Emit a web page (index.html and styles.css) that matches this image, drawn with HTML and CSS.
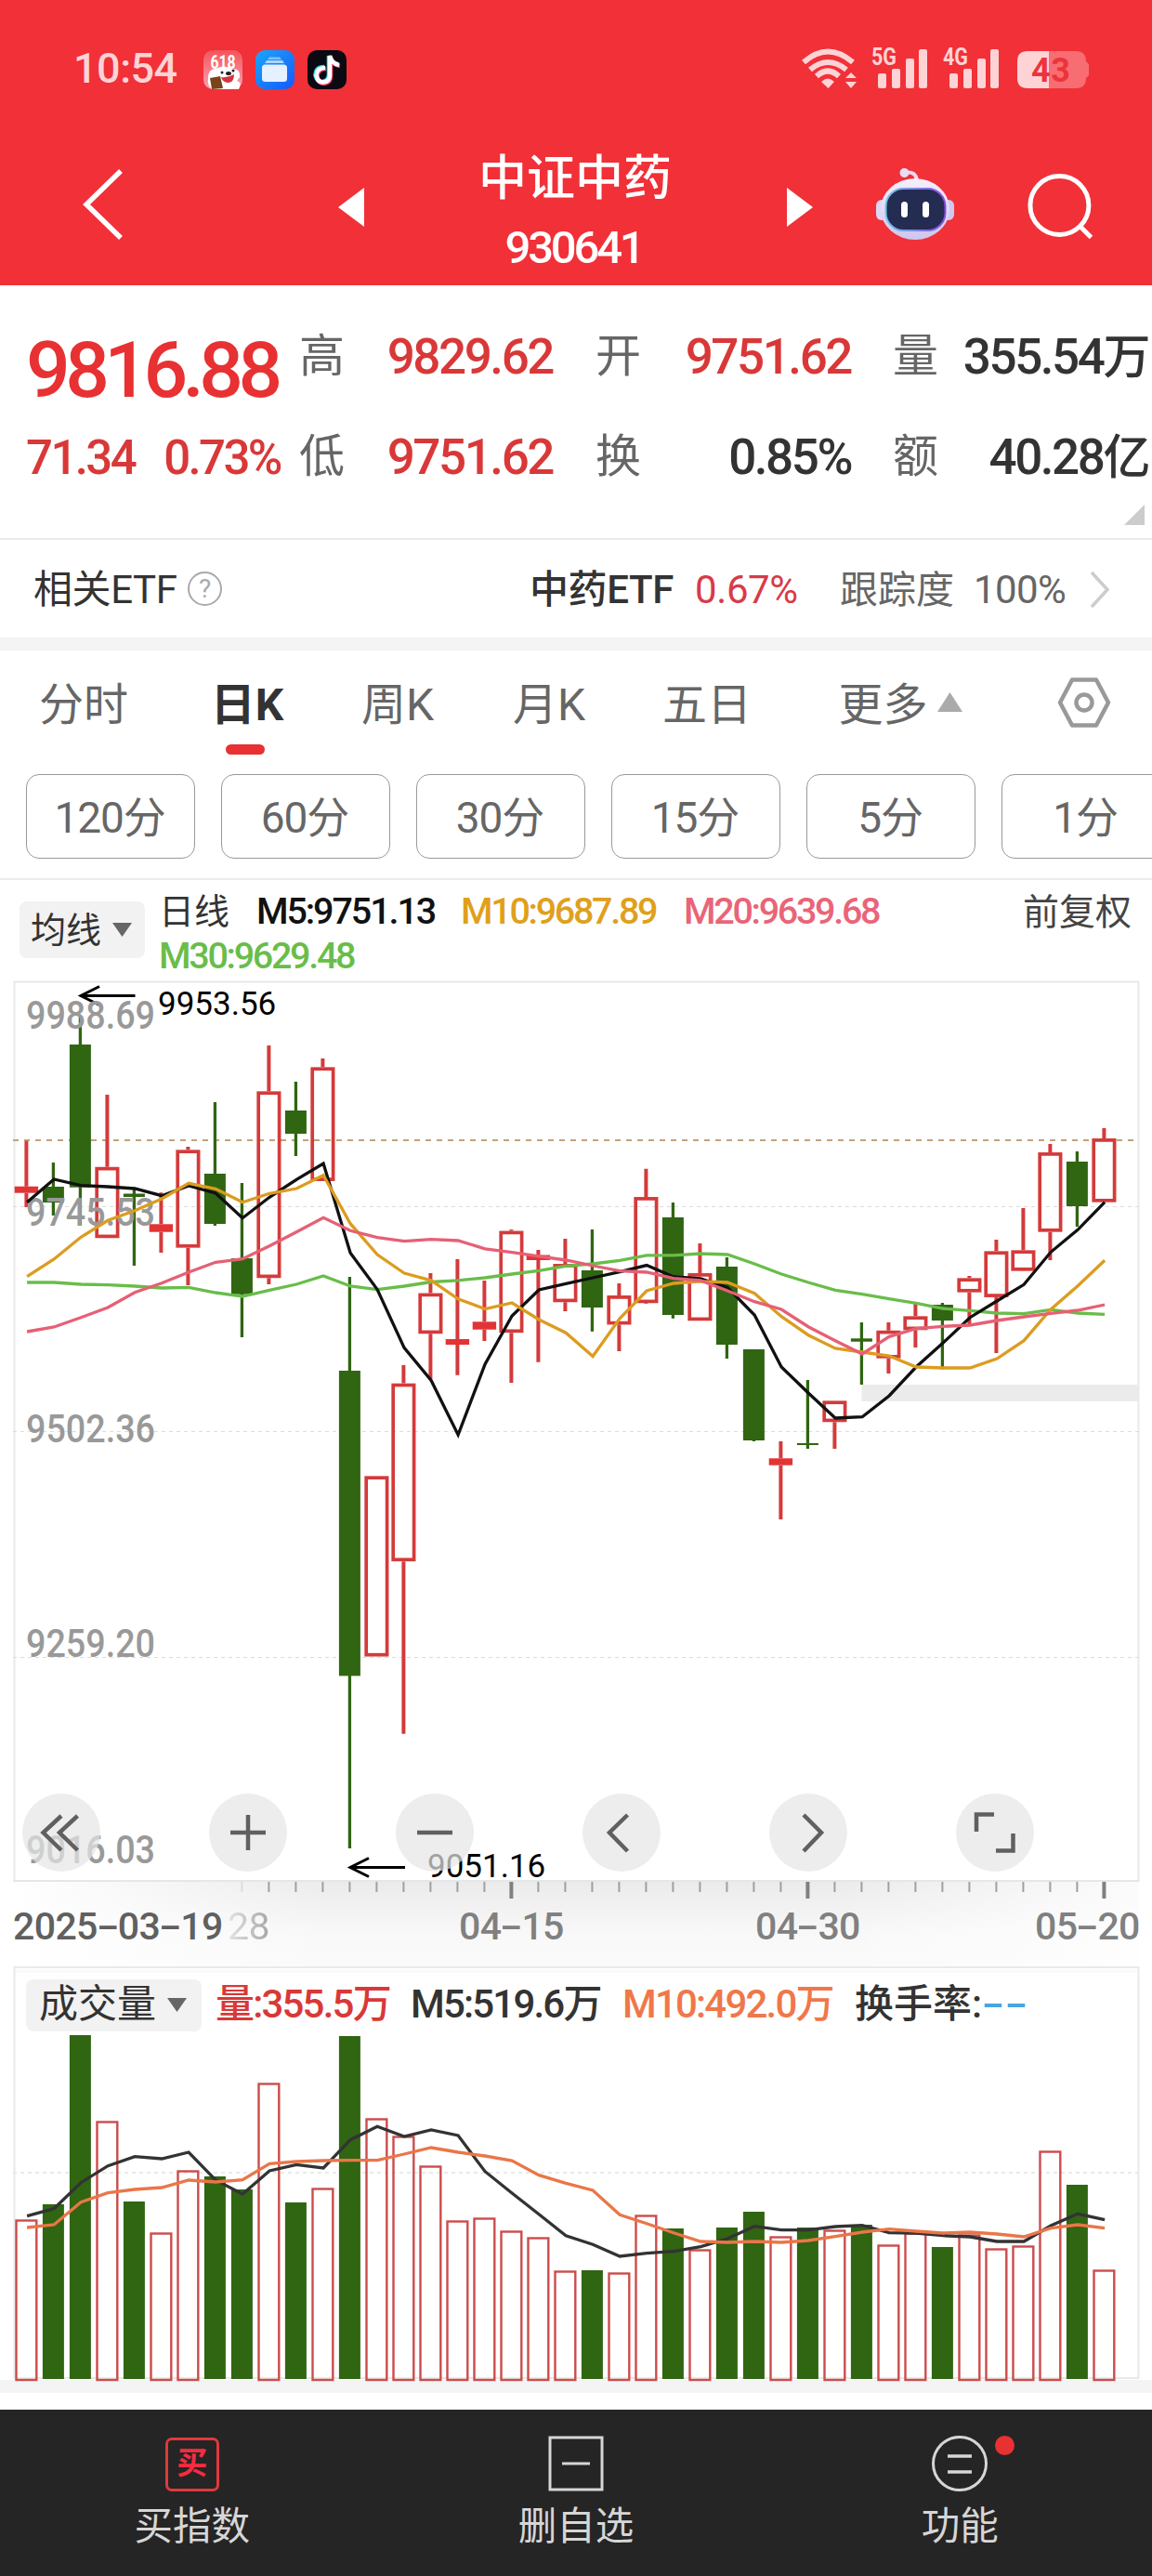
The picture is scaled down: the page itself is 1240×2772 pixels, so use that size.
FILE: index.html
```html
<!DOCTYPE html>
<html lang="zh-CN">
<head>
<meta charset="utf-8">
<title>中证中药 930641</title>
<link rel="stylesheet" href="styles.css">
</head>
<body>
<header class="header">
  <div class="status">
    <span class="clock">10:54</span>
    <div class="apps">
      <svg width="42" height="42" viewBox="0 0 42 42">
        <defs><linearGradient id="promo" x1="0" y1="0" x2="0" y2="1"><stop offset="0" stop-color="#f5545a"/><stop offset="1" stop-color="#f9a3b4"/></linearGradient></defs>
        <rect width="42" height="42" rx="10" fill="url(#promo)"/>
        <path d="M5 30Q5 20 13 20Q22 15 30 20Q40 19 39 29L36 33Q42 35 38 42H9Q4 38 5 30Z" fill="#fff"/>
        <text x="21" y="19.500" class="promo-text" textLength="27" lengthAdjust="spacingAndGlyphs">618</text>
        <path d="M19 29Q26 30 33 26Q33 35 26 35Q20 34 19 29Z" fill="#d8323c"/>
        <ellipse cx="27" cy="25" rx="3" ry="2" fill="#222"/><circle cx="20" cy="24" r="1.500" fill="#222"/><circle cx="32" cy="22" r="1.500" fill="#222"/>
        <path d="M7 30L18 28L21 41L9 42Z" fill="#7a4319"/>
      </svg>
      <svg width="42" height="42" viewBox="0 0 42 42">
        <defs><linearGradient id="blue" x1="0" y1="0" x2="1" y2="1"><stop offset="0" stop-color="#1ba6fb"/><stop offset="1" stop-color="#1559fb"/></linearGradient></defs>
        <rect width="42" height="42" rx="10" fill="url(#blue)"/>
        <path d="M15 7.500H26L28 10H13Z" fill="#7fc3fd"/><path d="M12 11H29L31 14H10Z" fill="#a9d6fe"/>
        <rect x="7" y="15.500" width="27" height="18.500" rx="3.500" fill="#e6f1ff"/>
      </svg>
      <svg width="42" height="42" viewBox="0 0 42 42">
        <rect width="42" height="42" rx="10" fill="#0b0912"/>
        <g fill="none" stroke-width="4.600">
          <path d="M18 18Q9 18 8.500 27Q10 34 16 34Q23 33 23 26V6Q25 14 33 15" stroke="#25e0e0"/>
          <path d="M20 20Q11 20 10.500 28Q12 36 18 36Q25 35 25 28V8Q27 16 35 17" stroke="#f5345c"/>
          <path d="M19 19Q10 19 9.500 27Q11 35 17 34.500Q24 34 24 27V6Q26 14.500 34 16" stroke="#fff"/>
        </g>
      </svg>
    </div>
    <svg class="signals" width="320" height="60" viewBox="860 40 320 60">
      <g fill="none" stroke="#fdd3d5" stroke-width="6">
        <path d="M865 67Q891 44 918 67"/><path d="M872 75Q891 59 911 75"/><path d="M879 82Q891 71 903 82"/>
      </g>
      <g fill="#fdd3d5">
        <path d="M884 88Q891 81 898 88L891.500 95Z"/><path d="M910 84L916 78L922 84ZM910 88L916 95L922 88Z"/>
        <rect x="945" y="79" width="9" height="16" rx="2"/><rect x="960" y="74" width="9" height="21" rx="2"/><rect x="975" y="63" width="9" height="32" rx="2"/><rect x="989" y="53" width="9" height="42" rx="2"/>
        <rect x="1022" y="79" width="9" height="16" rx="2"/><rect x="1037" y="74" width="9" height="21" rx="2"/><rect x="1052" y="63" width="9" height="32" rx="2"/><rect x="1066" y="53" width="9" height="42" rx="2"/>
        <text x="938" y="70" class="net" textLength="27" lengthAdjust="spacingAndGlyphs">5G</text>
        <text x="1015" y="70" class="net" textLength="27" lengthAdjust="spacingAndGlyphs">4G</text>
      </g>
      <path d="M1129 55H1158Q1169 55 1169 66L1172 69V81L1169 84Q1169 95 1158 95H1129Z" fill="#f86d72"/>
      <path d="M1129 55H1106Q1095 55 1095 66V84Q1095 95 1106 95H1129Z" fill="#fdd3d5"/>
      <text x="1110" y="87.500" class="battery" textLength="42">43</text>
    </svg>
  </div>
  <nav class="nav">
    <svg class="back" width="48" height="80" viewBox="88 180 48 80"><path d="M130 184L93 220L130 256" fill="none" stroke="#fff" stroke-width="5.500"/></svg>
    <svg class="prev" width="28" height="42"><path d="M28 0V42L0 21Z" fill="#fff"/></svg>
    <div class="title"><h1>中证中药</h1><span>930641</span></div>
    <svg class="next" width="28" height="42"><path d="M0 0V42L28 21Z" fill="#fff"/></svg>
    <svg class="robot" width="88" height="80" viewBox="941 180 88 80">
      <defs>
        <linearGradient id="shell" x1="0" y1="0" x2="0" y2="1"><stop offset="0" stop-color="#f6effb"/><stop offset="1" stop-color="#cdc6ef"/></linearGradient>
        <linearGradient id="visor" x1="0" y1="0" x2="1" y2="0"><stop offset="0" stop-color="#6fc5e8"/><stop offset="1" stop-color="#8a4be0"/></linearGradient>
      </defs>
      <path d="M973 186Q986 183 987 195" fill="none" stroke="#f1d9ee" stroke-width="4"/><circle cx="973.500" cy="186" r="5" fill="#e9dcf5"/>
      <rect x="943" y="215" width="13" height="22" rx="6" fill="#ddd5f3"/><rect x="1014" y="215" width="13" height="22" rx="6" fill="#cfc8f1"/>
      <ellipse cx="985" cy="225" rx="37" ry="33" fill="url(#shell)"/>
      <rect x="953.500" y="203" width="64" height="45" rx="19" fill="#242c52" stroke="url(#visor)" stroke-width="2"/>
      <rect x="970" y="217" width="7" height="17" rx="3.500" fill="#fff"/><rect x="993" y="217" width="7" height="17" rx="3.500" fill="#fff"/>
    </svg>
    <svg class="search" width="72" height="72" viewBox="1105 186 72 72"><circle cx="1140.400" cy="221" r="31.500" fill="none" stroke="#fff" stroke-width="5"/><path d="M1162 243L1174.500 255.500" stroke="#fff" stroke-width="5"/></svg>
  </nav>
</header>

<section class="quote">
  <div class="last">9816.88</div>
  <div class="change"><span>71.34</span><span>0.73%</span></div>
  <dl class="stats">
    <dt>高</dt><dd class="up">9829.62</dd><dt>开</dt><dd class="up">9751.62</dd><dt>量</dt><dd>355.54<i>万</i></dd>
    <dt>低</dt><dd class="up">9751.62</dd><dt>换</dt><dd>0.85%</dd><dt>额</dt><dd>40.28<i>亿</i></dd>
  </dl>
  <svg class="corner" width="22" height="22"><path d="M22 0V22H0Z" fill="#ccc"/></svg>
</section>

<section class="etf">
  <span class="etf-label">相关ETF</span><span class="help">?</span>
  <b>中药ETF</b><span class="etf-pct">0.67%</span><span class="track">跟踪度</span><span class="track-pct">100%</span>
  <svg width="24" height="42"><path d="M3 2L20 20.500L3 39" fill="none" stroke="#ccc" stroke-width="3.500"/></svg>
</section>

<section class="periods">
  <div class="tabs">
    <span>分时</span><span class="active">日K</span><span>周K</span><span>月K</span><span>五日</span>
    <span class="more">更多<svg width="27" height="21"><path d="M13.500 0L27 21H0Z" fill="#aaa"/></svg></span>
    <span class="settings"><svg width="60" height="60" viewBox="-30 -30 60 60" fill="none" stroke="#999" stroke-width="4.500" stroke-linejoin="round"><path d="M-13 -24.500H13L26 0L13 24.500H-13L-26 0Z"/><circle r="8.500"/></svg></span>
  </div>
  <div class="minutes"><button>120分</button><button>60分</button><button>30分</button><button>15分</button><button>5分</button><button>1分</button></div>
</section>

<section class="legend">
  <div class="picker">均线<svg width="21" height="15"><path d="M0 0H21L10.500 15Z" fill="#666"/></svg></div>
  <div class="averages"><span class="day">日线</span><span class="m5">M5:9751.13</span><span class="m10">M10:9687.89</span><span class="m20">M20:9639.68</span><span class="m30">M30:9629.48</span></div>
  <div class="adjust">前复权</div>
</section>

<section class="kline">
  <svg width="1240" height="970" viewBox="0 1055 1240 970">
    <path d="M15.500 2025V1056.500H1225.500V2025" fill="none" stroke="#e9e9e9" stroke-width="2"/>
    <path d="M14 2024H1226" stroke="#e6e6e6" stroke-width="2"/>
    <path d="M14 1298.500H1226M14 1540.500H1226M14 1783.500H1226" stroke="#dcdcdc" stroke-dasharray="4 4"/>
    <path d="M14 1227H1222" stroke="#c2a27a" stroke-width="2" stroke-dasharray="6 6"/>
    <rect x="927.500" y="1490" width="298.500" height="18" fill="#ebebeb"/>
    <g id="candles"></g>
    <path d="M145.500 1071.500H87M107 1061.500L87 1071.500L107 1081.500M436 2009.500H377M397 1999.500L377 2009.500L397 2019.500" class="arrow"/>
    <g class="axis">
      <text x="28" y="1107" textLength="139" lengthAdjust="spacingAndGlyphs">9988.69</text><text x="28" y="1319" textLength="139" lengthAdjust="spacingAndGlyphs">9745.53</text>
      <text x="28" y="1551.500" textLength="139" lengthAdjust="spacingAndGlyphs">9502.36</text><text x="28" y="1783" textLength="139" lengthAdjust="spacingAndGlyphs">9259.20</text><text x="28" y="2005" textLength="139" lengthAdjust="spacingAndGlyphs">9016.03</text>
    </g>
    <g id="averages"></g>
    <g class="mark"><text x="170" y="1092">9953.56</text><text x="460" y="2019.500">9051.16</text></g>
  </svg>
  <div class="controls">
    <button><svg viewBox="24 1930 84 84"><path d="M66 1954L46.500 1972L66 1991M83.500 1954L64 1972L83.500 1991"/></svg></button>
    <button><svg viewBox="225 1930 84 84"><path d="M248 1972H286M267 1953V1991"/></svg></button>
    <button><svg viewBox="426 1930 84 84"><path d="M449 1972H487"/></svg></button>
    <button><svg viewBox="627 1930 84 84"><path d="M675.500 1953L656 1972L675.500 1992"/></svg></button>
    <button><svg viewBox="828 1930 84 84"><path d="M865 1953L884 1972L865 1992"/></svg></button>
    <button><svg viewBox="1029 1930 84 84"><path d="M1070 1952.500H1051V1971M1090.500 1973V1991.500H1072"/></svg></button>
  </div>
</section>

<section class="dates">
  <svg width="1240" height="20" viewBox="0 2025 1240 20" id="ticks"></svg>
  <div class="days"><span class="first">2025<i>-</i>03<i>-</i>19</span><span class="faded">28</span><span class="d1">04<i>-</i>15</span><span class="d2">04<i>-</i>30</span><span class="d3">05<i>-</i>20</span></div>
</section>

<section class="volume">
  <svg width="1240" height="446" viewBox="0 2116 1240 446">
    <path d="M14 2119H1226V2123H14Z" fill="#fafafa"/>
    <path d="M15.500 2560V2117H1225.500V2559H15" fill="none" stroke="#e9e9e9" stroke-width="2"/>
    <path d="M14 2338H1226" stroke="#e9e9e9" stroke-width="2" stroke-dasharray="4 4"/>
    <g id="bars"></g>
  </svg>
  <div class="vol-legend">
    <div class="picker">成交量<svg width="21" height="15"><path d="M0 0H21L10.500 15Z" fill="#666"/></svg></div>
    <span class="v0">量:355.5万</span><span class="v5">M5:519.6万</span><span class="v10">M10:492.0万</span><span class="rate">换手率:</span><span class="none"><i>-</i><i>-</i></span>
  </div>
</section>

<footer class="toolbar">
  <div><span class="buy">买</span><p>买指数</p></div>
  <div><svg width="60" height="60"><path d="M2 2H58V58H2ZM15 30H45" fill="none" stroke="#d6d6d6" stroke-width="3"/></svg><p>删自选</p></div>
  <div><svg width="60" height="60"><circle cx="30" cy="30" r="28.500" fill="none" stroke="#d6d6d6" stroke-width="3"/><path d="M17 22H43M17 39H43" stroke="#d6d6d6" stroke-width="3.500"/></svg><em></em><p>功能</p></div>
</footer>
<script src="chart.js"></script>
</body>
</html>
```
FILE: styles.css
```css
* { box-sizing: border-box; }
body { margin: 0; width: 1240px; height: 2772px; overflow: hidden; background: #fff; color: #333; font-family: Roboto, "Noto Sans CJK SC", sans-serif; display: flex; flex-direction: column; }
svg { display: block; flex: none; overflow: visible; }
i { font-style: normal; }
button { font: inherit; padding: 0; border: 0; flex: none; }

.header { height: 307px; background: #f13038; color: #fff; }
.status { height: 140px; display: flex; padding: 50px 60px 0 79px; }
.clock { width: 140px; font-size: 45px; line-height: 48px; font-weight: 500; color: #fdd3d5; letter-spacing: -.5px; }
.apps { display: flex; gap: 14px; padding-top: 4px; }
.signals { margin: -10px 0 0 auto; }
.promo-text { font-size: 20px; font-weight: 700; fill: #fff; text-anchor: middle; }
.net { font-size: 26px; font-weight: 700; }
.battery { font-size: 36px; font-weight: 700; fill: #ee333b; }
.nav { height: 167px; display: flex; align-items: flex-start; }
.back { margin: 40px 0 0 88px; }
.prev { margin: 62px 0 0 228px; }
.title { width: 340px; margin-left: 57px; text-align: center; }
.title h1 { margin: 19px 0 0; font-size: 52px; font-weight: 500; line-height: 68px; }
.title span { display: block; margin-top: 13px; font-size: 49px; font-weight: 500; line-height: 54px; letter-spacing: -3.200px; text-indent: -3px; }
.next { margin: 62px 0 0 58px; }
.robot { margin: 40px 0 0 66px; }
.search { margin: 46px 0 0 76px; }

.quote { height: 274px; border-bottom: 2px solid #ebebeb; display: grid; grid-template-columns: 294px 1fr; grid-template-rows: 106px 54px; padding: 50px 2px 0 28px; position: relative; align-content: start; row-gap: 0; }
.last { color: #e83132; font-size: 84px; line-height: 84px; font-weight: 500; letter-spacing: -5.600px; white-space: nowrap; }
.change { grid-row: 2; color: #d93838; font-size: 51px; line-height: 60px; font-weight: 500; letter-spacing: -2.600px; display: flex; gap: 31px; white-space: nowrap; }
.stats { grid-column: 2; grid-row: 1 / 3; margin: 0; display: grid; grid-template-columns: 50px 223px 96px 225px 95px 225px; grid-auto-rows: 54px; row-gap: 54px; font-size: 53px; line-height: 54px; }
.stats dt { font-size: 49px; color: #666; text-align: right; padding-right: 1px; }
.stats dt:nth-of-type(3n+1) { text-align: left; }
.stats dd { margin: 0; text-align: right; font-weight: 500; letter-spacing: -2.450px; white-space: nowrap; }
.stats dd i { font-size: 51px; }
.stats .up { color: #d93838; }
.corner { position: absolute; left: 1210px; top: 236px; }

.etf { height: 105px; display: flex; align-items: center; padding: 3px 0 0 36px; font-size: 42px; line-height: 60px; letter-spacing: -.400px; white-space: nowrap; }
.etf-label { width: 166px; }
.help { width: 37px; height: 37px; border: 2px solid #aaa; border-radius: 50%; color: #aaa; font-size: 28px; line-height: 34px; text-align: center; margin: -4px 331px 0 0; }
.etf b { width: 178px; font-weight: 500; }
.etf-pct { width: 156px; color: #d93a48; }
.track { width: 144px; color: #666; font-size: 41px; letter-spacing: 0; }
.track-pct { width: 124px; color: #666; letter-spacing: -.600px; }

.periods { height: 261px; border-top: 14px solid #f4f4f4; border-bottom: 2px solid #ebebeb; overflow: hidden; }
.tabs { display: grid; grid-template-columns: 180px 172px 152px 174px 166px 250px 146px; height: 133px; font-size: 48px; line-height: 56px; color: #666; padding-top: 31px; text-align: center; }
.tabs span { display: flex; justify-content: center; }
.tabs .active { font-weight: 700; color: #333; position: relative; }
.active::after { content: ""; position: absolute; left: 63px; top: 70px; width: 42px; height: 11px; border-radius: 6px; background: #e83132; }
.more { gap: 10px; }
.more svg { margin-top: 14px; }
.settings svg { margin-top: -5px; }
.minutes { display: flex; gap: 28px; padding-left: 28px; }
.minutes button { width: 182px; height: 91px; padding: 0 2px 5px 0; border: 1.500px solid #999; border-radius: 14px; background: #fff; color: #666; font-size: 46px; letter-spacing: -1.100px; }

.legend { height: 108px; display: flex; font-size: 39.500px; line-height: 46px; padding-top: 11px; white-space: nowrap; }
.picker { display: flex; align-items: center; background: #f2f2f2; border-radius: 8px; }
.legend .picker { width: 135px; height: 61px; margin: 12px 15px 0 21px; padding-left: 12px; gap: 12px; font-size: 38px; }
.averages { display: grid; grid-template-columns: 105px 220px 240px 250px; grid-auto-rows: 48px; letter-spacing: -2.300px; font-weight: 500; width: 930px; }
.day { font-size: 38px; letter-spacing: 0; font-weight: 400; }
.m5 { color: #111; letter-spacing: -2.100px; }
.m10 { color: #dfa01c; }
.m20 { color: #ea6478; }
.m30 { color: #69bd4a; grid-column: 1 / 4; }
.adjust { font-size: 39px; line-height: 48px; color: #444; }

.kline { height: 970px; position: relative; }
.axis { font-size: 42px; font-weight: 500; fill: #999; }
.mark { font-size: 35px; fill: #000; }
.arrow { fill: none; stroke: #000; stroke-width: 3; }
.controls { position: absolute; left: 24px; top: 875px; display: flex; gap: 117px; }
.controls button { width: 84px; height: 84px; border-radius: 50%; background: rgba(229, 229, 229, .7); }
.controls svg { width: 84px; height: 84px; fill: none; stroke: #606060; stroke-width: 4.500; }

.dates { height: 91px; background: linear-gradient(90deg, #fff 15px, rgba(255,255,255,0) 360px, rgba(255,255,255,0) 900px, rgba(255,255,255,.8) 1225px, #fff 1226px), linear-gradient(#ebebeb, #f8f8f8 60%, #fafafa); }
.days { display: flex; font-size: 41px; line-height: 50px; margin-top: 3px; padding-left: 14px; color: #808080; font-weight: 500; letter-spacing: -.600px; white-space: nowrap; }
.days i { display: inline-block; width: 22px; text-align: center; transform: scaleX(1.750); }
.first { width: 231px; color: #606060; }
.faded { width: 249px; font-weight: 400; background: linear-gradient(90deg, #e4e4e4, #aaa 42px); -webkit-background-clip: text; background-clip: text; color: transparent; }
.d1 { width: 319px; }
.d2 { width: 301px; }

.volume { height: 446px; position: relative; }
.vol-legend { position: absolute; left: 28px; top: 14px; display: flex; align-items: center; height: 56px; font-size: 42px; line-height: 52px; font-weight: 500; letter-spacing: -1.800px; white-space: nowrap; }
.vol-legend span { padding-bottom: 3px; }
.vol-legend .picker { width: 189px; height: 56px; padding: 0 0 2px 14px; gap: 12px; font-size: 42px; font-weight: 400; letter-spacing: 0; margin-right: 15px; }
.v0 { width: 210px; color: #d93838; }
.v5 { width: 228px; }
.v10 { width: 250px; color: #f0774a; }
.rate { width: 139px; letter-spacing: 0; }
.none { display: flex; gap: 8px; color: #48a5e0; }
.none i { width: 17px; text-align: center; transform: scaleX(1.700); }

.toolbar { height: 211px; margin-top: -1px; border-top: 14px solid #f4f4f4; display: grid; grid-template-columns: repeat(3, 1fr); background: linear-gradient(#fff 18px, #252525 18px); padding-top: 46px; }
.toolbar div { display: flex; flex-direction: column; align-items: center; position: relative; }
.toolbar p { margin: 8px 0 0; font-size: 41.500px; line-height: 60px; color: #d6d6d6; }
.buy { width: 58px; height: 58px; margin: 2px 0 0; border: 3px solid #e0393c; border-radius: 7px; color: #f52c3f; font-size: 33px; font-weight: 700; line-height: 50px; text-align: center; }
.toolbar em { position: absolute; left: 244px; top: 0; width: 21px; height: 21px; border-radius: 50%; background: #e83132; }
```
FILE: chart.js
```js
// Pixel geometry per trading day: [rising, high, body top, body bottom, low]
const candles = [
  [1,1227.7,1276.7,1283.7,1299],[0,1251,1277,1294,1308],[0,1093,1124,1277.7,1318.7],[1,1178,1255.7,1332.3,1332],
  [0,1280,1284.5,1288,1362],[1,1283.3,1317.3,1325.7,1348],[1,1234,1237.3,1342.7,1383],[0,1186,1263,1317,1319],
  [0,1273,1354,1392.7,1439],[1,1125,1174.3,1375.3,1382],[0,1164,1195,1220,1244],[1,1139,1148.3,1271,1271],
  [0,1374,1475,1803.4,1989],[1,1589,1588.3,1782.6,1782],[1,1469,1488.6,1680.2,1865.8],[1,1370,1391.5,1435.3,1484],
  [1,1355,1441,1447,1479.8],[1,1378,1422.3,1430.7,1443],[1,1323,1324.5,1434.2,1488],[1,1345,1350.5,1356,1465.8],
  [1,1333,1360,1401.3,1411],[0,1323,1367,1407,1432.8],[1,1381,1394,1425.5,1454],[1,1257.8,1288,1402.3,1403],
  [0,1294,1310,1415,1418.8],[1,1338,1370,1421.3,1421],[0,1353,1363,1447,1462],[0,1452,1452,1550,1551],
  [1,1551,1569.3,1576.7,1635],[0,1485,1553,1555,1559],[1,1508,1507.3,1530.3,1559],[0,1423,1440.3,1443.7,1490],
  [1,1423,1431.7,1461.7,1478],[1,1401.3,1416.3,1431.3,1450],[0,1402,1404,1421,1473.3],[1,1373,1375.3,1390.7,1425],
  [1,1334,1346.3,1396,1456],[1,1300,1345.3,1367.7,1368],[1,1231,1240,1325.7,1356],[0,1239,1250,1298,1320],[1,1214,1225,1293.7,1293]
];
const priceLines = {
  '#69bd4a': [1380,1380,1382,1382.7,1384,1386,1385.3,1391,1395,1388.3,1382,1373,1384,1387.7,1384,1379.5,1377.8,1375,1371,1367.3,1362.3,1360,1356.4,1350.8,1350.8,1349,1350,1360,1371,1380,1388.3,1392.7,1397.7,1402.3,1408,1410.3,1413,1413.7,1409.3,1413,1414.3],
  '#111': [1293.7,1269,1275.7,1277,1279,1286.7,1276,1284,1310.7,1288.3,1269.3,1252,1348.3,1387.5,1450.4,1485.5,1544,1468,1416,1388,1381.3,1375,1368.7,1361.6,1374,1376,1385.5,1415,1471,1499,1526,1524.7,1502,1471,1445,1417.7,1400,1382.3,1347.3,1323.3,1293.7],
  '#dc9c20': [1373.7,1355,1331.3,1313.3,1302.7,1290,1273.3,1279.3,1293.7,1284.3,1279,1264.7,1316.7,1350,1370,1377.8,1397.8,1408.6,1402,1420,1434.2,1459.5,1418.8,1389,1381,1378.8,1380,1391.7,1416.7,1436.7,1451,1455,1459,1471,1472,1472,1462,1442.7,1409,1383.7,1356.3],
  '#e66074': [1433,1428,1417.7,1407,1390.7,1380.7,1369,1358.3,1354.7,1340.7,1325.7,1310.3,1324.3,1331.7,1335.7,1333.6,1335,1343.8,1347.6,1351.8,1356,1362,1367.6,1369,1375.7,1378,1389,1400.7,1409,1427.7,1442.7,1457,1438.3,1429.7,1427.3,1426,1421,1417,1413.3,1410,1404]
};
const volumes = [2388.3,2372,2190,2282.3,2369,2402.3,2335.3,2342,2356,2241.3,2370,2354.3,2191,2279.3,2298.3,2330.3,2389.3,2386.3,2400.3,2407.3,2443.3,2443,2445.3,2383.3,2398,2420.3,2397,2380,2406.3,2397,2399.3,2394,2415.3,2402.3,2418,2404.3,2419.3,2416.3,2314.3,2351,2442.3];
const volumeLines = {
  '#333': [2384.7,2376.7,2348.7,2330.7,2320.7,2323,2316,2346,2361,2336,2329.3,2333,2302.7,2288.3,2299,2292,2298,2336.7,2360,2382.7,2405.7,2415.3,2428,2424.7,2422.7,2417.7,2409,2395.7,2399.7,2399.7,2396,2394.7,2402.7,2403,2405.7,2407,2412,2412,2395,2382.3,2388.7],
  '#ea7648': [2397,2394,2369.7,2359.7,2356,2354,2346,2348,2345.7,2328.3,2326,2325,2324.7,2324.7,2318,2311,2316,2320,2325,2340.7,2349.3,2357,2383.3,2392.7,2402.7,2412,2413,2412,2413,2411,2406.7,2402,2398.7,2401,2403,2402,2404,2407,2397.7,2394,2397.7]
};

const x = i => 28.4 + i * 29;
const green = '#306512', red = '#d43a3a';
const lines = set => Object.entries(set).map(([color, ys]) =>
  `<polyline fill="none" stroke="${color}" stroke-width="3.3" points="${ys.map((y, i) => `${x(i) + 0.7},${y}`).join(' ')}"/>`).join('');

document.getElementById('candles').innerHTML = candles.map(([up, high, top, bottom, low], i) => {
  const c = x(i);
  if (!up) return `<path d="M${c} ${high}V${low}" stroke="${green}" stroke-width="3.3"/><rect x="${c - 11.5}" y="${top}" width="23" height="${bottom - top}" fill="${green}"/>`;
  const wick = `<path d="M${c} ${high}V${Math.max(top, high)}M${c} ${bottom}V${Math.max(bottom, low)}" stroke="${red}" stroke-width="4"/>`;
  if (bottom - top < 9) return wick + `<rect x="${c - 12.7}" y="${top}" width="25.4" height="${bottom - top}" fill="#e23434"/>`;
  return wick + `<rect x="${c - 11.2}" y="${top + 1.9}" width="22.4" height="${bottom - top - 3.8}" fill="none" stroke="${red}" stroke-width="3.7"/>`;
}).join('');
document.getElementById('averages').innerHTML = lines(priceLines);

document.getElementById('bars').innerHTML = volumes.map((top, i) => candles[i][0]
  ? `<rect x="${x(i) - 10.9}" y="${top + 1.2}" width="21.8" height="${2559.8 - top}" fill="none" stroke="#cc4c4c" stroke-width="2.4"/>`
  : `<rect x="${x(i) - 11.5}" y="${top}" width="23" height="${2560 - top}" fill="${green}"/>`).join('') + lines(volumeLines);

let ticks = '';
for (let i = 8; i <= 40; i++) {
  const major = i === 18 || i === 29 || i === 40;
  ticks += `<path d="M${x(i)} 2025V${major ? 2043 : 2036}" stroke="${i === 8 ? '#ddd' : major ? '#808080' : '#a0a0a0'}" stroke-width="${major ? 4 : 2}"/>`;
}
document.getElementById('ticks').innerHTML = ticks;
```
